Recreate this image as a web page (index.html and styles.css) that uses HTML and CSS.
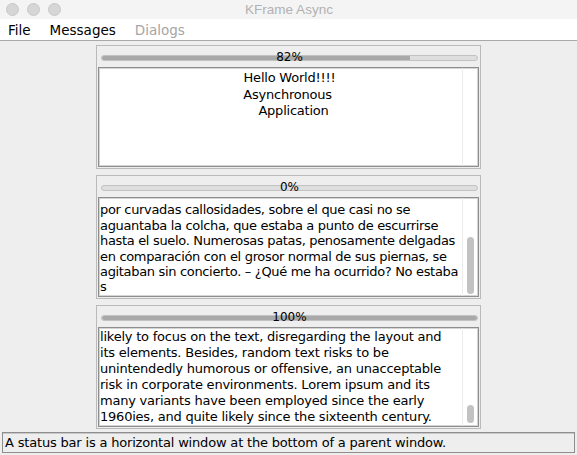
FILE: index.html
```html
<!DOCTYPE html>
<html>
<head>
<meta charset="utf-8">
<link rel="stylesheet" href="styles.css">
</head>
<body>
<div class="window">
  <div class="titlebar">
    <div class="lights"><span></span><span></span><span></span></div>
    <div class="title">KFrame Async</div>
  </div>
  <div class="menubar">
    <span class="menu">File</span>
    <span class="menu">Messages</span>
    <span class="menu disabled">Dialogs</span>
  </div>
  <div class="content">
    <div class="panel">
      <div class="progress">
        <div class="track"><div class="fill" style="width:82%"></div></div>
        <span class="label">82%</span>
      </div>
      <div class="textarea">
        <div class="text centered">
          <div class="line">Hello World!!!!</div>
          <div class="line">Asynchronous&nbsp;</div>
          <div class="line shift">Application</div>
        </div>
        <div class="scrollbar"></div>
      </div>
    </div>
    <div class="panel">
      <div class="progress">
        <div class="track"><div class="fill" style="width:0%"></div></div>
        <span class="label">0%</span>
      </div>
      <div class="textarea">
        <div class="text scrolled">
          <div class="line">por curvadas callosidades, sobre el que casi no se</div>
          <div class="line">aguantaba la colcha, que estaba a punto de escurrirse</div>
          <div class="line">hasta el suelo. Numerosas patas, penosamente delgadas</div>
          <div class="line">en comparación con el grosor normal de sus piernas, se</div>
          <div class="line">agitaban sin concierto. – ¿Qué me ha ocurrido? No estaba</div>
          <div class="line">s</div>
        </div>
        <div class="scrollbar"><div class="thumb thumb-a"></div></div>
      </div>
    </div>
    <div class="panel">
      <div class="progress">
        <div class="track"><div class="fill" style="width:100%"></div></div>
        <span class="label">100%</span>
      </div>
      <div class="textarea">
        <div class="text">
          <div class="line">likely to focus on the text, disregarding the layout and</div>
          <div class="line">its elements. Besides, random text risks to be</div>
          <div class="line">unintendedly humorous or offensive, an unacceptable</div>
          <div class="line">risk in corporate environments. Lorem ipsum and its</div>
          <div class="line">many variants have been employed since the early</div>
          <div class="line">1960ies, and quite likely since the sixteenth century.</div>
        </div>
        <div class="scrollbar"><div class="thumb thumb-b"></div></div>
      </div>
    </div>
  </div>
  <div class="statusbar">A status bar is a horizontal window at the bottom of a parent window.</div>
</div>
</body>
</html>
```
FILE: styles.css
```css
html, body {
  margin: 0;
  padding: 0;
}
body {
  background: #eeeeee;
  font-family: "DejaVu Sans", sans-serif;
  color: #000;
  width: 577px;
  height: 455px;
  overflow: hidden;
}
.window {
  display: flex;
  flex-direction: column;
  height: 455px;
}
.titlebar {
  height: 19px;
  background: #f4f4f4;
  display: grid;
  align-items: center;
}
.lights, .title {
  grid-area: 1 / 1;
}
.lights {
  display: flex;
  gap: 8px;
  padding-left: 6px;
}
.lights span {
  width: 11px;
  height: 11px;
  border-radius: 50%;
  background: #d6d6d6;
  border: 0.5px solid #c8c8c8;
}
.title {
  justify-self: center;
  font-family: "Liberation Sans", sans-serif;
  font-size: 13.5px;
  color: #b2b2b2;
  padding-left: 1px;
}
.menubar {
  height: 22px;
  background: #ffffff;
  border-bottom: 1px solid #a9a9a9;
  display: flex;
  align-items: center;
  padding-left: 8px;
  gap: 19px;
  font-size: 13.5px;
}
.menu.disabled {
  color: #a6a6a6;
}
.content {
  flex: 1;
  display: flex;
  flex-direction: column;
  gap: 6px;
  padding: 4px 96px 0;
}
.panel {
  height: 124px;
  box-sizing: border-box;
  border: 1px solid #bababa;
  padding: 0 1px 1px 1px;
  display: flex;
  flex-direction: column;
}
.progress {
  height: 21px;
  flex: none;
  display: grid;
  align-items: start;
}
.track, .label {
  grid-area: 1 / 1;
}
.track {
  margin: 9px 1px 0 3px;
  height: 6px;
  box-sizing: border-box;
  border: 1px solid #c2c2c2;
  background: #dedede;
  border-radius: 3px;
  overflow: hidden;
}
.fill {
  height: 100%;
  background: #a9a9a9;
}
.label {
  justify-self: center;
  margin-top: 4px;
  line-height: 14px;
  font-size: 12px;
  padding-left: 2px;
}
.textarea {
  flex: 1;
  background: #ffffff;
  border: 1px solid #8e8e8e;
  box-shadow: inset 0 0 0 1px #d4d4d4;
  display: flex;
  overflow: hidden;
}
.text {
  flex: 1;
  padding: 1px 0 0 1px;
  font-size: 13px;
  letter-spacing: -0.22px;
  line-height: 16px;
  overflow: hidden;
}
.text.scrolled {
  padding-top: 4px;
  line-height: 15.4px;
  letter-spacing: -0.33px;
}
.line {
  white-space: pre;
}
.text.centered {
  text-align: center;
  padding-top: 2px;
  padding-left: 18px;
  line-height: 16.5px;
}
.line.shift {
  padding-left: 8px;
}
.scrollbar {
  width: 15px;
  flex: none;
  border-left: 1px solid #ececec;
  display: flex;
  flex-direction: column;
  align-items: center;
}
.thumb {
  width: 7px;
  border-radius: 4px;
  background: #c2c2c2;
}
.thumb-a {
  margin-top: 39px;
  height: 57px;
}
.thumb-b {
  margin-top: 77px;
  height: 18px;
}
.statusbar {
  margin: 3px 2px 2px;
  height: 19px;
  border: 1px solid #8e8e8e;
  box-shadow: inset 0 1px 0 #c8c8c8;
  padding-left: 2px;
  font-size: 13px;
  letter-spacing: -0.18px;
  line-height: 19px;
  white-space: nowrap;
  overflow: hidden;
}
```
